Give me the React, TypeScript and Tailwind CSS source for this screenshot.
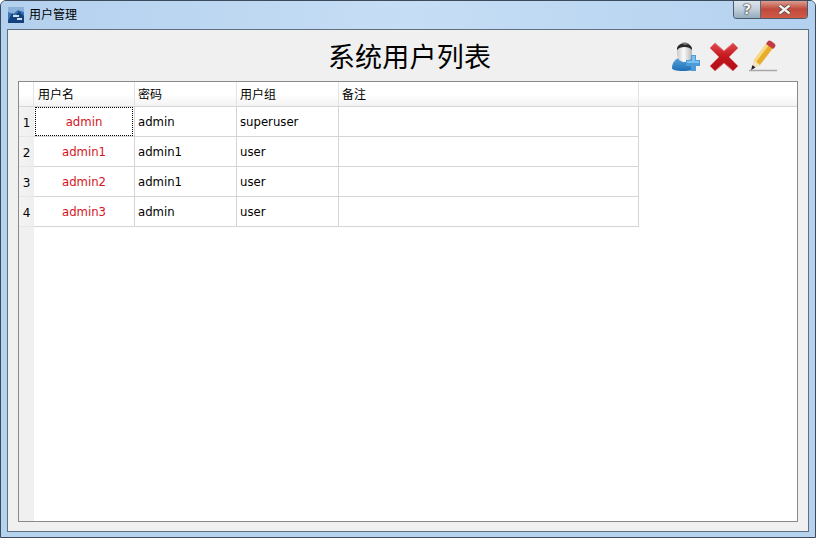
const FONT = { fontFamily: '"DejaVu Sans", "Noto Sans CJK SC", sans-serif' };

const COLS = ['用户名', '密码', '用户组', '备注'];
const WIDTHS = ['w-[101px]', 'w-[102px]', 'w-[102px]', 'w-[300px]'];

const ROWS = [
  ['admin', 'admin', 'superuser'],
  ['admin1', 'admin1', 'user'],
  ['admin2', 'admin1', 'user'],
  ['admin3', 'admin', 'user'],
];

function AppIcon() {
  return (
    <svg width="16" height="16" viewBox="0 0 16 16">
      <rect width="16" height="16" fill="#3a74b4" />
      <path d="M0 0 H16 V5 L10 3 L5 7 L0 5 Z" fill="#8db2da" />
      <path d="M0 14 L4 6 L7 9 L11 4 L16 9 V16 H0 Z" fill="#15437f" />
      <path d="M5 8 h6 v2 h-6 z M9 11 h5 v2 h-5 z" fill="#cfe0f2" />
    </svg>
  );
}

function AddUserIcon() {
  return (
    <svg width="30" height="32" viewBox="0 0 30 32">
      <defs>
        <linearGradient id="ub" x1="0" y1="0" x2="0" y2="1">
          <stop offset="0" stopColor="#5aa8e0" />
          <stop offset="1" stopColor="#1d6fb4" />
        </linearGradient>
        <linearGradient id="uf" x1="0" y1="0" x2="1" y2="0">
          <stop offset="0" stopColor="#c9c9c9" />
          <stop offset="0.45" stopColor="#fbfbfb" />
          <stop offset="1" stopColor="#b5b5b5" />
        </linearGradient>
      </defs>
      <path d="M1 28 C1 22 5 18 11 17 L18 17 C22 19 24 23 24 28 C24 30 19 31 12 31 C5 31 1 30 1 28 Z" fill="url(#ub)" />
      <path d="M6 8 C6 5 21 5 21 8 L21 15 C20 21 16 22 13.5 22 C10 22 7 20 6 15 Z" fill="url(#uf)" />
      <path d="M6 10 C5 1 22 1 21 10 C18 6 9 6 6 10 Z" fill="#2a2a2a" />
      <path d="M10 3.5 C12 2 16 2 18 4 L14 5 Z" fill="#777" />
      <path d="M20 15 h5 v5 h4 v6 h-4 v5 h-5 v-5 h-5 v-6 h5 z" fill="#4b9cd9" />
      <path d="M21 16 h3 v5 h4 v2 h-12 v-2 h5 z" fill="#7cc0ee" />
    </svg>
  );
}

function DeleteIcon() {
  return (
    <svg width="32" height="33" viewBox="0 0 32 33">
      <defs>
        <linearGradient id="xr" x1="0" y1="0" x2="0" y2="1">
          <stop offset="0" stopColor="#e04a50" />
          <stop offset="0.5" stopColor="#c4151c" />
          <stop offset="1" stopColor="#b00f16" />
        </linearGradient>
      </defs>
      <path transform="translate(0 1)" d="M2 7 L7 2 L16 10 L25 2 L30 7 L21 16 L30 25 L25 30 L16 22 L7 30 L2 25 L11 16 Z" fill="url(#xr)" stroke="#dc7a7e" strokeWidth="1" strokeLinejoin="round" />
    </svg>
  );
}

function EditIcon() {
  return (
    <svg width="32" height="32" viewBox="0 0 32 32">
      <path d="M2 30.5 H30" stroke="#a8a8a8" strokeWidth="1.5" />
      <path d="M7 20 L20 3 L26 8 L13 25 L6 28 Z" fill="#e9ad2c" />
      <path d="M7 20 L20 3 L22 5 L9 22 Z" fill="#f8dc84" />
      <path d="M19 4 L21 1 Q22 0 24 1 L28 4 Q29 6 28 7 L26 9 Z" fill="#c23a44" />
      <path d="M7 20 L13 25 L5 29 Z" fill="#f3e3c0" />
      <path d="M5.5 25 L8.5 27.5 L4 30 Z" fill="#222" />
    </svg>
  );
}

export default function App() {
  return (
    <div className="w-[816px] h-[538px] overflow-hidden flex flex-col bg-[#b5d2ee] rounded-t-[6px] border border-[#3d4a59]" style={FONT}>
      {/* Title bar */}
      <div className="h-[28px] shrink-0 flex items-start pl-[7px] bg-gradient-to-r from-[#b3d0ee] via-[#c6def5] to-[#b3d1ef]">
        <div className="flex items-center gap-[5px] mt-[6px]">
          <AppIcon />
          <span className="text-[12px] leading-[16px] text-black">用户管理</span>
        </div>
        <div className="ml-auto mr-[7px] flex h-[19px] -mt-px rounded-b-[4px] border border-t-0 border-[#4c5a6a] overflow-hidden">
          <div className="w-[27px] flex items-center justify-center bg-gradient-to-b from-[#dfe7ef] via-[#c3d0dc] to-[#95abbd] border-r border-[#5a6877] text-[14px] font-bold text-[#f6f6f6] [text-shadow:0_0_1px_#111,0_0_2px_#111]">?</div>
          <div className="w-[46px] flex items-center justify-center bg-gradient-to-b from-[#dfa79c] via-[#bf4a3c] to-[#cf5a48]">
            <svg width="15" height="11" viewBox="0 0 15 11">
              <path d="M2.5 1.5 L12.5 9.5 M12.5 1.5 L2.5 9.5" stroke="#3b3b3b" strokeWidth="3.6" />
              <path d="M2.5 1.5 L12.5 9.5 M12.5 1.5 L2.5 9.5" stroke="#f4f0ee" strokeWidth="2.4" />
            </svg>
          </div>
        </div>
      </div>

      {/* Client area */}
      <div className="mx-[6px] h-[503px] shrink-0 border border-[#5f6f80] bg-[#f0f0f0] flex flex-col px-[10px] pb-[9px]">
        <div className="h-[51px] shrink-0 relative flex items-center justify-center pt-[5px] pl-[3px]">
          <span className="text-[27px] leading-[36px] tracking-[0.2px] text-black">系统用户列表</span>
          <div className="absolute left-[653px] top-[10px] flex items-start gap-[7px]">
            <AddUserIcon />
            <DeleteIcon />
            <EditIcon />
          </div>
        </div>

        {/* Table */}
        <div className="flex-1 border border-[#8a8a8a] bg-white flex flex-col text-[11.7px] text-black min-h-0">
          <div className="h-[25px] shrink-0 flex border-b border-[#d5d5d5] bg-gradient-to-b from-white via-white to-[#f3f3f3] text-[12px]">
            <div className="w-[15px] shrink-0 border-r border-[#e3e3e3]" />
            {COLS.map((c, i) => (
              <div key={c} className={`${WIDTHS[i]} shrink-0 ${i === 0 ? 'pl-[4px]' : 'pl-[3px]'} leading-[26px] border-r border-[#e3e3e3]`}>
                {c}
              </div>
            ))}
          </div>
          <div className="flex-1 flex min-h-0">
            <div className="w-[15px] shrink-0 bg-[#f0f0f0] flex flex-col">
              {ROWS.map((_, i) => (
                <div key={i} className="h-[30px] flex items-center justify-center pt-[2px] text-[12px] bg-gradient-to-r from-[#f3f3f3] to-[#efefef] border-b border-[#e6e6e6]">
                  {i + 1}
                </div>
              ))}
            </div>
            <div className="flex flex-col">
              {ROWS.map((r, i) => (
                <div key={i} className="h-[30px] flex border-b border-[#d5d5d5]">
                  <div className="w-[101px] shrink-0 border-r border-[#d5d5d5] px-[1px]">
                    <div className={`h-full flex items-center justify-center pt-[2px] text-[#d5141e] ${i === 0 ? 'border border-dotted border-black' : 'border border-transparent'}`}>
                      {r[0]}
                    </div>
                  </div>
                  <div className="w-[102px] shrink-0 border-r border-[#d5d5d5] flex items-center pt-[2px] pl-[3px]">{r[1]}</div>
                  <div className="w-[102px] shrink-0 border-r border-[#d5d5d5] flex items-center pt-[2px] pl-[3px]">{r[2]}</div>
                  <div className="w-[300px] shrink-0 border-r border-[#d5d5d5]" />
                </div>
              ))}
            </div>
          </div>
        </div>
      </div>
    </div>
  );
}
